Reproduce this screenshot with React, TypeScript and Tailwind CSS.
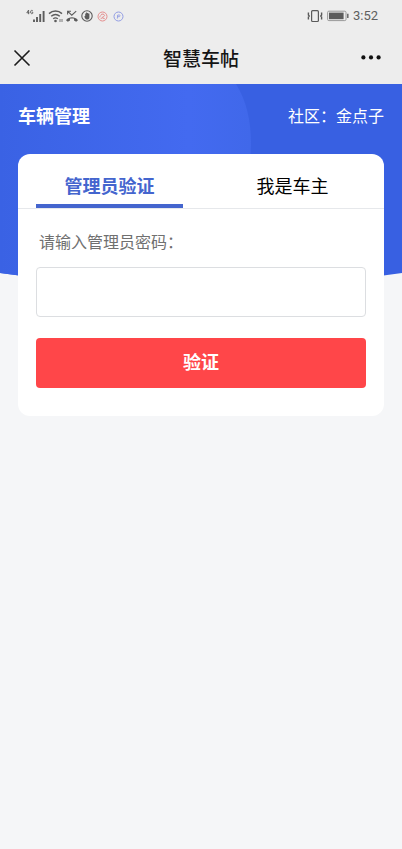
import { useState } from "react";

const SignalIcon = () => (
  <svg width="20" height="14" viewBox="0 0 20 14" fill="none" stroke="#5c5c5c" aria-hidden="true">
    <path d="M2.6 1 L0.8 3.8 H3.4 M2.6 1 V5.2" strokeWidth="0.9" />
    <path d="M6.8 1.8 C6 0.8 4.6 1.2 4.6 3 C4.6 5 6.2 5 6.8 4.2 V3.2 H5.8" strokeWidth="0.9" />
    <path d="M8 13 V10.5 M11 13 V8 M14.2 13 V5 M17.6 13 V2" strokeWidth="1.9" />
  </svg>
);

const WifiIcon = () => (
  <svg width="15" height="14" viewBox="0 0 15 14" fill="none" stroke="#5c5c5c" aria-hidden="true">
    <path d="M1 4.6 C4.8 1.2 10.2 1.2 14 4.6" strokeWidth="1.5" />
    <path d="M3.2 7.3 C5.8 5.1 9.2 5.1 11.8 7.3" strokeWidth="1.5" />
    <path d="M5.2 9.8 C6.6 8.7 8.4 8.7 9.8 9.8" strokeWidth="1.4" />
    <circle cx="7.5" cy="12" r="1.3" fill="#5c5c5c" stroke="none" />
    <path d="M12 10 V13 M14 10 V13" strokeWidth="0.8" />
  </svg>
);

const MissedCallIcon = () => (
  <svg width="14" height="14" viewBox="0 0 14 14" fill="none" stroke="#5c5c5c" aria-hidden="true">
    <path d="M2.6 5.6 V2.2 H6 M2.8 2.4 L6.8 6.2 L11.2 2.2" strokeWidth="1.1" />
    <path
      d="M1 11.2 C4 7.4 10 7.4 13 11.2 L11.2 12.8 L9 11.4 V9.8 C7.8 9.3 6.2 9.3 5 9.8 V11.4 L2.8 12.8 Z"
      fill="#5c5c5c"
      stroke="none"
    />
  </svg>
);

const HandIcon = () => (
  <svg width="12" height="12" viewBox="0 0 12 12" fill="none" stroke="#5c5c5c" aria-hidden="true">
    <circle cx="6" cy="6" r="5.2" strokeWidth="1.1" />
    <path
      d="M3.2 6.6 L4.2 6 V3.5 H5.1 V2.5 H6.1 V2.9 H7.1 V3.5 H8.4 V7.4 C8.4 10 4.8 10 4.1 8.2 Z"
      fill="#5c5c5c"
      stroke="none"
    />
  </svg>
);

const RedAppIcon = () => (
  <svg width="11" height="11" viewBox="0 0 11 11" fill="none" stroke="#e58f8f" aria-hidden="true">
    <circle cx="5.5" cy="5.5" r="4.5" strokeWidth="1" />
    <path d="M2.8 6.4 C2.8 4.4 4.2 4.8 4.6 3.2 C6.6 2.6 8.2 4 7.4 5.2 M6 7 C5.2 6 6 5.2 7 5.6 M3.6 7.8 L5.2 6.8 L7.8 7.8" />
  </svg>
);

const BlueAppIcon = () => (
  <svg width="11" height="11" viewBox="0 0 11 11" fill="none" stroke="#929de4" aria-hidden="true">
    <circle cx="5.5" cy="5.5" r="4.5" strokeWidth="1" />
    <path d="M4.3 7.6 L4.7 4 H6.4 C7.4 4.1 7.1 5.7 6.1 5.7 H4.6" strokeWidth="0.9" />
  </svg>
);

const VibrateIcon = () => (
  <svg width="16" height="14" viewBox="0 0 16 14" fill="none" stroke="#5a5a5a" aria-hidden="true">
    <rect x="4.6" y="1.7" width="6.8" height="10.8" rx="1" strokeWidth="1.2" />
    <path d="M1.4 3.6 V6 L2.2 7 L1.4 8 V10.4 M14.6 3.6 V6 L13.8 7 L14.6 8 V10.4" strokeWidth="1.4" />
  </svg>
);

const BatteryIcon = () => (
  <svg width="22" height="12" viewBox="0 0 22 12" fill="none" aria-hidden="true">
    <rect x="0.6" y="1.2" width="18.4" height="9.4" rx="1.2" stroke="#999" />
    <rect x="2" y="2.6" width="14.6" height="6.6" fill="#5c5c5c" />
    <path d="M20.8 3.8 V8" stroke="#666" strokeWidth="1.5" />
  </svg>
);

const StatusBar = () => (
  <div className="flex h-8 items-center justify-between pr-6 pl-[26px]">
    <div className="flex items-center gap-1">
      <div className="flex items-center gap-[2px]">
        <SignalIcon />
        <WifiIcon />
        <MissedCallIcon />
        <HandIcon />
      </div>
      <div className="flex items-center gap-[5px]">
        <RedAppIcon />
        <BlueAppIcon />
      </div>
    </div>
    <div className="flex items-center gap-1">
      <VibrateIcon />
      <BatteryIcon />
      <span className="font-[Roboto,sans-serif] text-[13px] text-[#5f5f5f]">3:52</span>
    </div>
  </div>
);

const TitleBar = () => (
  <header className="grid h-[52px] grid-cols-[1fr_auto_1fr] items-center pr-5 pl-3">
    <button type="button" aria-label="关闭" className="flex size-5 items-center justify-center">
      <svg width="18" height="18" viewBox="0 0 18 18" stroke="#1c1c1c" strokeWidth="1.6" aria-hidden="true">
        <path d="M1.5 1.5 L16.5 16.5 M16.5 1.5 L1.5 16.5" />
      </svg>
    </button>
    <h1 className="pl-2 text-[19px] font-medium text-[#151515]">智慧车帖</h1>
    <button type="button" aria-label="更多" className="flex h-5 items-center justify-center justify-self-end">
      <svg width="22" height="6" viewBox="0 0 22 6" fill="#111" aria-hidden="true">
        <circle cx="3.4" cy="2.4" r="2.1" />
        <circle cx="11" cy="2.4" r="2.1" />
        <circle cx="18.6" cy="2.4" r="2.1" />
      </svg>
    </button>
  </header>
);

const HeroBackground = () => (
  <svg
    className="absolute inset-x-0 top-0 h-[204px] w-full"
    viewBox="0 0 402 204"
    preserveAspectRatio="none"
    aria-hidden="true"
  >
    <defs>
      <linearGradient id="glow" x1="0" y1="0" x2="1" y2="0">
        <stop offset="0" stopColor="#3a62e4" />
        <stop offset="0.75" stopColor="#436af0" />
        <stop offset="1" stopColor="#4068ea" />
      </linearGradient>
      <clipPath id="hero">
        <path d="M0 0 H402 V189 Q201 219 0 189 Z" />
      </clipPath>
    </defs>
    <g clipPath="url(#hero)">
      <rect width="402" height="204" fill="#3860e2" />
      <path d="M0 0 H236 Q251 24 251 60 Q251 140 180 204 H0 Z" fill="url(#glow)" />
    </g>
  </svg>
);

const tabs = ["管理员验证", "我是车主"];

export default function App() {
  const [active, setActive] = useState(0);

  return (
    <div className="min-h-screen bg-[#f5f6f8] font-['Noto_Sans_CJK_SC',sans-serif]">
      <div className="bg-[#ededed]">
        <StatusBar />
        <TitleBar />
      </div>

      <main className="relative px-[18px]">
        <HeroBackground />

        <div className="relative flex h-[70px] items-center justify-between pb-2 text-white">
          <h2 className="text-lg font-bold">车辆管理</h2>
          <p className="text-base">社区：金点子</p>
        </div>

        <section className="relative rounded-xl bg-white pb-7">
          <div role="tablist" className="grid grid-cols-2 border-b border-[#e6e8eb]">
            {tabs.map((tab, i) => (
              <div key={tab} className="px-[18px]">
                <button
                  type="button"
                  role="tab"
                  aria-selected={active === i}
                  onClick={() => setActive(i)}
                  className={
                    active === i
                      ? "h-[54px] w-full border-b-4 border-[#4465ce] pt-3 text-lg font-bold text-[#4465ce]"
                      : "h-[54px] w-full border-b-4 border-transparent pt-3 text-lg text-black"
                  }
                >
                  {tab}
                </button>
              </div>
            ))}
          </div>

          <form className="px-[18px] pt-[18px]" onSubmit={(e) => e.preventDefault()}>
            <label htmlFor="password" className="block px-[3px] text-base leading-7 text-[#707070]">
              请输入管理员密码：
            </label>
            <input
              id="password"
              type="password"
              className="mt-3 block h-[50px] w-full rounded border border-[#dcdee1] bg-white px-3 text-base outline-none"
            />
            <button
              type="submit"
              className="mt-[21px] block h-[50px] w-full rounded bg-[#ff4649] pb-1 text-lg font-bold text-white"
            >
              验证
            </button>
          </form>
        </section>
      </main>
    </div>
  );
}
